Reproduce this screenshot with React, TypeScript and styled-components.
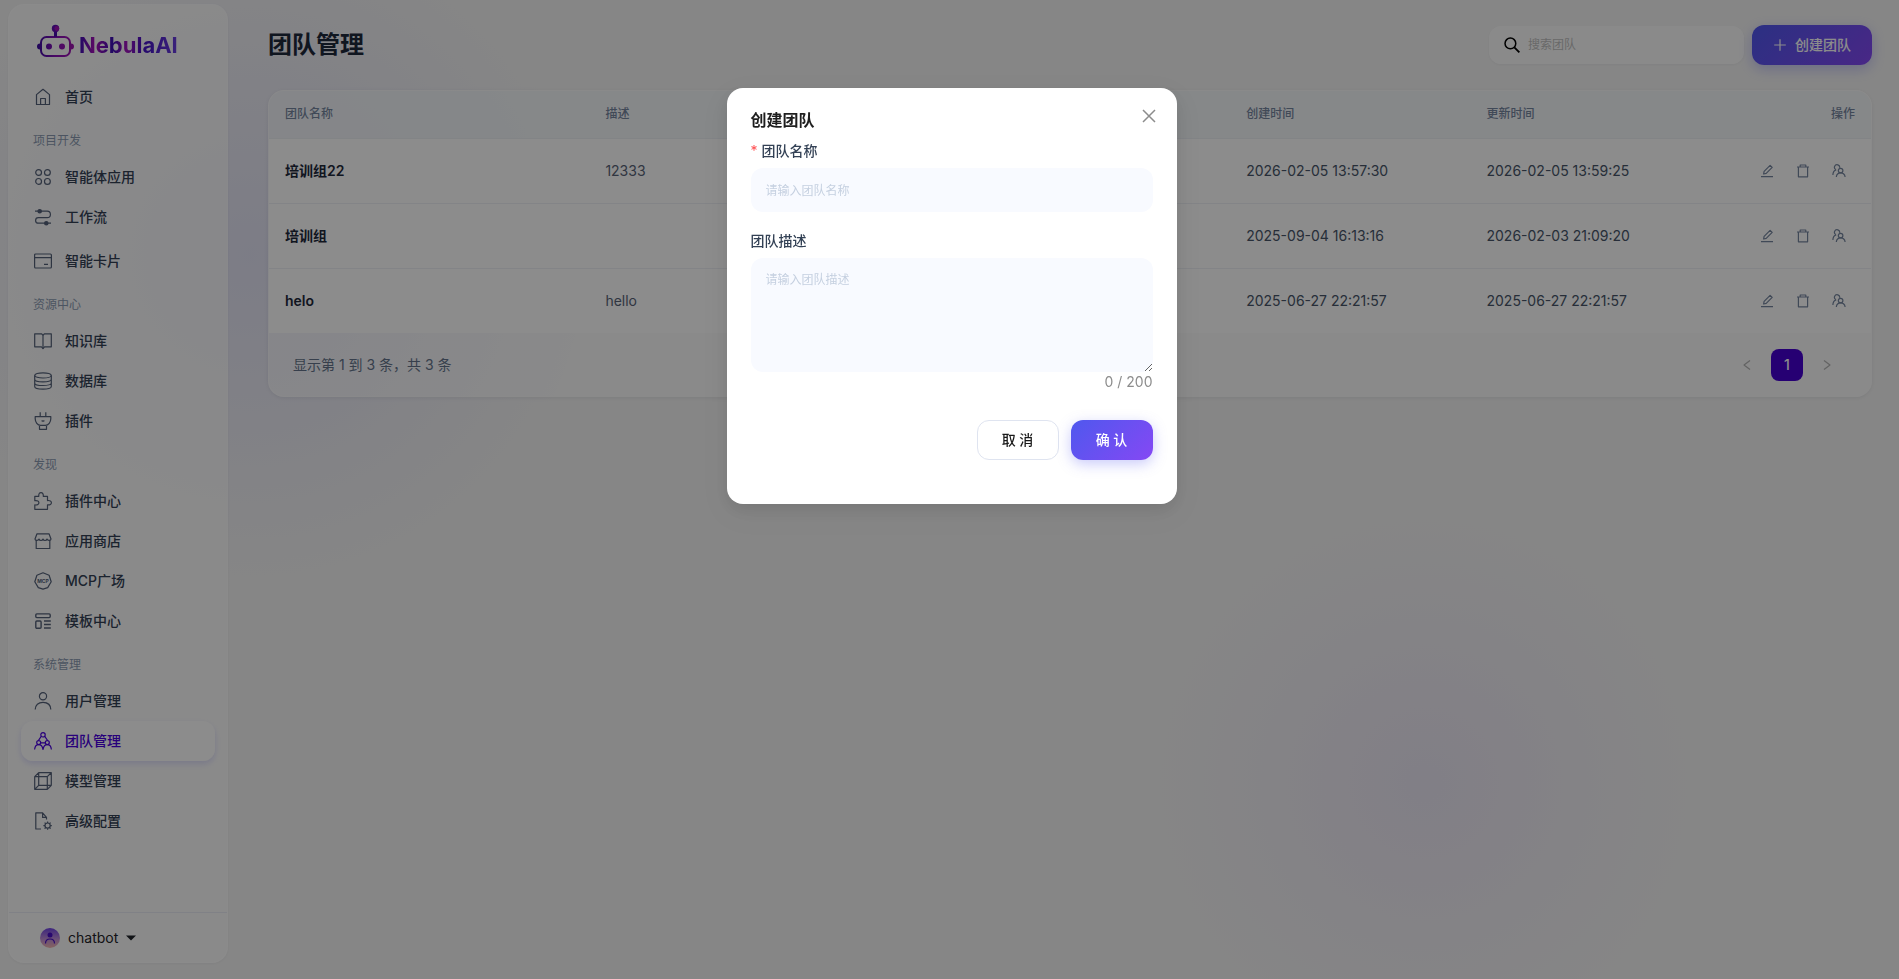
import React, { useState } from "react";
import styled, { createGlobalStyle, css } from "styled-components";

const GlobalStyle = createGlobalStyle`
  *, *::before, *::after { box-sizing: border-box; }
  body {
    margin: 0;
    font-family: Inter, "Noto Sans CJK SC", sans-serif;
    font-size: 14px;
    line-height: 22px;
    color: #334155;
    background: #f5f5f5;
  }
  button, input, textarea { font: inherit; color: inherit; }
  button { cursor: pointer; }
`;

const Page = styled.div`
  display: flex;
  min-height: 100vh;
  background:
    radial-gradient(circle 340px at 250px 255px, rgba(99, 102, 241, 0.13), transparent),
    radial-gradient(circle 285px at 75% 80%, rgba(139, 92, 246, 0.09), transparent),
    #f5f5f5;
`;

/* ---------- sidebar ---------- */

const Sidebar = styled.aside`
  display: flex;
  flex: none;
  flex-direction: column;
  width: 220px;
  margin: 4px 0 16px 8px;
  border: 1px solid rgba(255, 255, 255, 0.3);
  border-radius: 16px;
  background: rgba(255, 255, 255, 0.7);
  box-shadow: 0 1px 3px rgba(15, 23, 42, 0.05);
`;

const Brand = styled.a`
  display: flex;
  align-items: center;
  gap: 4px;
  height: 72px;
  padding: 0 28px;
  text-decoration: none;
`;

const BrandName = styled.span`
  padding-top: 8px;
  font-size: 22px;
  line-height: 24px;
  font-weight: 700;
  background: linear-gradient(90deg, #3b0fb5 0%, #a912b8 16%, #3b0fb5 34%, #a314bd 48%, #4410c4 64%, #6b3fe0 100%);
  background-clip: text;
  -webkit-background-clip: text;
  color: transparent;
`;

const Nav = styled.nav`
  flex: 1;
  padding: 0 12px;
`;

const SectionLabel = styled.h2`
  margin: 0;
  padding: 15px 12px 7px;
  font-size: 12px;
  line-height: 18px;
  font-weight: 400;
  color: #8b9ab1;
`;

const NavItem = styled.a<{ $active?: boolean; $spaced?: boolean }>`
  display: flex;
  align-items: center;
  gap: 13px;
  height: 40px;
  padding: 0 13px;
  border-radius: 12px;
  font-weight: 500;
  text-decoration: none;
  color: #334155;
  svg { color: #546179; }
  ${(p) => p.$spaced && css`margin-top: 4px;`}
  ${(p) =>
    p.$active &&
    css`
      color: #4a00e0;
      background: rgba(255, 255, 255, 0.8);
      box-shadow: 0 3px 6px rgba(99, 102, 241, 0.2);
      svg { color: #4a00e0; }
    `}
`;

const Account = styled.button`
  display: flex;
  align-items: center;
  gap: 8px;
  height: 50px;
  padding: 0 31px;
  border: 0;
  border-top: 1px solid #e9ebf5;
  background: none;
  color: #1f2329;
`;

/* ---------- main area ---------- */

const Main = styled.main`
  flex: 1;
  min-width: 0;
  padding: 25px 27px 16px 40px;
`;

const TopBar = styled.header`
  display: flex;
  align-items: center;
  gap: 8px;
  height: 40px;
  margin-bottom: 25px;
`;

const Title = styled.h1`
  flex: 1;
  margin: 0;
  font-size: 24px;
  line-height: 32px;
  font-weight: 600;
  color: #1e293b;
`;

const SearchBox = styled.label`
  display: flex;
  align-items: center;
  gap: 8px;
  width: 255px;
  height: 38px;
  padding: 0 15px;
  border-radius: 12px;
  background: rgba(255, 255, 255, 0.7);
  box-shadow: 0 1px 3px rgba(15, 23, 42, 0.05);
  color: #000;
`;

const SearchInput = styled.input`
  flex: 1;
  min-width: 0;
  padding: 0;
  border: 0;
  outline: 0;
  background: none;
  font-size: 12px;
  &::placeholder { color: #bfbfbf; }
`;

const Button = styled.button<{ $primary?: boolean }>`
  display: inline-flex;
  align-items: center;
  justify-content: center;
  gap: 8px;
  min-width: 82px;
  height: 40px;
  padding: 0 20px;
  border: 0;
  border-radius: 12px;
  font-weight: 500;
  white-space: nowrap;
  ${(p) =>
    p.$primary
      ? css`
          padding: 0 21px;
          color: #fff;
          background: linear-gradient(135deg, #4f58ee 0%, #8548f4 100%);
          box-shadow: 0 4px 14px rgba(99, 102, 241, 0.35);
        `
      : css`
          color: #1a1a1a;
          border: 1px solid #dfe4f0;
          background: #fff;
        `}
`;

const Card = styled.section`
  overflow: hidden;
  border: 1px solid rgba(255, 255, 255, 0.3);
  border-radius: 16px;
  background: rgba(255, 255, 255, 0.55);
  box-shadow: 0 1px 4px rgba(15, 23, 42, 0.08);
`;

const Table = styled.table`
  width: 100%;
  border-collapse: separate;
  border-spacing: 0;
  table-layout: fixed;
`;

const HeadCell = styled.th<{ $width: string; $end?: boolean }>`
  width: ${(p) => p.$width};
  height: 48px;
  padding: 0 16px 2px;
  border-bottom: 1px solid #edf0f5;
  background: rgba(241, 245, 249, 0.7);
  font-size: 12px;
  line-height: 18px;
  font-weight: 500;
  text-align: ${(p) => (p.$end ? "right" : "left")};
  color: #76869f;
`;

const Cell = styled.td<{ $tone?: "name" | "muted" }>`
  height: 65px;
  padding: 0 16px;
  border-bottom: 1px solid #eff1f6;
  background: #fff;
  color: ${(p) => (p.$tone === "name" ? "#1e293b" : p.$tone === "muted" ? "#586377" : "#475569")};
  font-weight: ${(p) => (p.$tone === "name" ? 600 : 400)};
  tr:last-child > & {
    height: 64px;
    border-bottom: 0;
  }
`;

const Actions = styled.div`
  display: flex;
  justify-content: flex-end;
  gap: 8px;
  padding-right: 2px;
`;

const IconButton = styled.button`
  display: grid;
  place-items: center;
  width: 28px;
  height: 28px;
  padding: 0;
  border: 0;
  background: none;
  color: #76869f;
`;

const TableFooter = styled.footer`
  display: flex;
  align-items: center;
  justify-content: space-between;
  height: 63px;
  padding: 0 28px 0 24px;
  color: #64748b;
`;

const Pager = styled.nav`
  display: flex;
  gap: 8px;
`;

const PageButton = styled.button<{ $current?: boolean }>`
  display: grid;
  place-items: center;
  width: 32px;
  height: 32px;
  padding: 0;
  border: 0;
  border-radius: 8px;
  font-weight: 500;
  color: ${(p) => (p.$current ? "#fff" : "#b4b4b4")};
  background: ${(p) => (p.$current ? "#4500d1" : "none")};
`;

/* ---------- dialog ---------- */

const Mask = styled.div`
  position: fixed;
  inset: 0;
  display: flex;
  align-items: flex-start;
  justify-content: center;
  padding: 88px 20px 24px 24px;
  overflow: auto;
  background: rgba(0, 0, 0, 0.45);
`;

const Dialog = styled.form`
  position: relative;
  width: 450px;
  padding: 20px 24px 44px;
  border-radius: 16px;
  background: #fff;
  box-shadow: 0 6px 16px rgba(0, 0, 0, 0.08), 0 9px 28px 8px rgba(0, 0, 0, 0.05);
`;

const DialogTitle = styled.h2`
  margin: 0 0 8px;
  font-size: 16px;
  line-height: 24px;
  font-weight: 600;
  color: #1f1f1f;
`;

const CloseButton = styled.button`
  position: absolute;
  top: 12px;
  right: 12px;
  display: grid;
  place-items: center;
  width: 32px;
  height: 32px;
  padding: 0;
  border: 0;
  background: none;
  color: #8c8c8c;
`;

const FieldLabel = styled.label`
  display: block;
  padding-bottom: 6px;
  font-weight: 500;
`;

const Required = styled.span`
  margin-right: 4px;
  font-weight: 400;
  color: #ff4d4f;
`;

const fieldLook = css`
  display: block;
  width: 100%;
  border: 0;
  border-radius: 12px;
  outline: 0;
  background: #f8faff;
  font-size: 12px;
  line-height: 20px;
  &::placeholder { color: #c5d0e0; }
`;

const TextInput = styled.input`
  ${fieldLook}
  height: 44px;
  margin-bottom: 18px;
  padding: 0 15px;
`;

const TextArea = styled.textarea`
  ${fieldLook}
  height: 114px;
  padding: 12px 15px;
  resize: vertical;
`;

const Counter = styled.output`
  display: block;
  margin-bottom: 28px;
  line-height: 20px;
  text-align: right;
  color: #8c8c8c;
`;

const DialogActions = styled.div`
  display: flex;
  justify-content: flex-end;
  gap: 12px;
`;

/* ---------- icons ---------- */

function Icon({ size = 18, width = 1.2, box = 18, children }: { size?: number; width?: number; box?: number; children: React.ReactNode }) {
  return (
    <svg width={size} height={size} viewBox={`0 0 ${box} ${box}`} fill="none" stroke="currentColor" strokeWidth={width} strokeLinejoin="round" aria-hidden="true">
      {children}
    </svg>
  );
}

const icons = {
  home: <><path d="M2.5 6.6 9 1.3l6.5 5.3v9.9h-13z" /><path d="M6.6 16.5v-6h4.8v6" /></>,
  apps: <><circle cx="4.6" cy="4.5" r="2.9" /><circle cx="13.4" cy="4.5" r="2.9" /><circle cx="4.6" cy="13.4" r="2.9" /><circle cx="13.4" cy="13.4" r="2.9" /></>,
  flow: <><path d="M1 3.2h12.2a3.2 3.2 0 0 1 0 6.4H4.4a2.8 2.8 0 0 0 0 5.6H17" /><circle cx="5.7" cy="3.2" r="1.7" fill="currentColor" /><circle cx="12.3" cy="15.2" r="1.7" fill="currentColor" /></>,
  card: <><rect x=".6" y="2" width="16.8" height="14" rx="1" /><path d="M.6 5.6h16.8M10 12.3h4" /></>,
  book: <><path d="M9 3.4 7.7 1.8H.7v13H7.5L9 16.6l1.5-1.8h6.8v-13h-7z" /><path d="M9 3.4v13.2" /></>,
  database: <><ellipse cx="9" cy="3.4" rx="8.3" ry="2.6" /><path d="M.7 3.4v11.2c0 1.5 3.7 2.6 8.3 2.6s8.3-1.1 8.3-2.6V3.4M.7 7.2c0 1.5 3.7 2.6 8.3 2.6s8.3-1.1 8.3-2.6M.7 10.9c0 1.5 3.7 2.6 8.3 2.6s8.3-1.1 8.3-2.6" /></>,
  plug: <><path d="M6.2.3v4.2M11.8.3v4.2M1.2 4.6h15.6v2.2c0 3.3-2.4 6.5-5.4 6.5H6.6c-3 0-5.4-3.2-5.4-6.5zM5.5 13.3v4h7v-4M7.6 8.6l1.4.7 1.4-.7" /></>,
  puzzle: <path d="M.8 4.3h4c-.3-2.400.7-3.700 2.200-3.700s2.600 1.300 2.300 3.700h4.200v4.300c2.500-.4 3.900.600 3.900 2.100s-1.400 2.500-3.900 2.100v4.500H.8v-4.400c2.700.4 4.100-.6 4.100-2.100S3.500 8.300.8 8.700z" />,
  shop: <><path d="M2.200 8.200v8.300h13.600V8.200M3 1.800h12l2 5.200c0 1.600-3.400 2-4 0-.5 2-3.500 2-4 0-.5 2-3.500 2-4 0-.6 2-4 1.600-4 0z" /></>,
  mcp: <><path d="M9 .8l6.100 2.500 2.100 6.400-3.500 5.900-4.700 1.500-4.700-1.500L.800 9.700l2.100-6.400z" /><text x="9" y="11" textAnchor="middle" fontSize="5" fontWeight="700" fill="currentColor" stroke="none">MCP</text></>,
  template: <><rect x="1.800" y="1.900" width="14.400" height="3.700" rx="1" strokeWidth="1.400" /><rect x="1.800" y="9" width="5.300" height="7.200" rx="1" strokeWidth="1.400" /><path d="M10 9h6.800M10 12.500h6.800M10 16h6.800" strokeWidth="1.400" /></>,
  user: <><circle cx="9" cy="4.300" r="3.600" /><path d="M1.200 17.600c0-4.700 3.200-7.300 7.800-7.300s7.800 2.600 7.800 7.300" /></>,
  team: <><circle cx="9" cy="2.800" r="2.200" /><circle cx="4.700" cy="10.600" r="2" /><circle cx="13.300" cy="10.600" r="2" /><path d="M7.200 4.300 4.400 8.500M10.800 4.300l2.800 4.200M.6 17.500c.3-2.900 1.800-4.800 4.100-4.800S8.500 14.400 9 17.500c.5-3.100 2-4.800 4.300-4.800s3.800 1.900 4.100 4.800M6.600 10.800h4.800" /></>,
  cube: <path d="M.7 4.700h12.600v12.600H.7zM4.700.7h12.600v12.600H4.700zM.7 4.700l4-4M13.300 4.700l4-4M13.300 17.300l4-4M.7 17.300l4-4" />,
  config: <><path d="M7 17H1.800V.8h6.800l3.900 4.600v2M8.600.8v4.600h3.900" /><circle cx="13.600" cy="13.600" r="2.600" /><path d="M13.600 9.400v1.600M13.600 16.200v1.600M9.400 13.600H11M16.200 13.600h1.600M10.600 10.600l1.100 1.100M15.500 15.500l1.100 1.100M10.600 16.600l1.100-1.100M15.500 11.700l1.100-1.100" /></>,
};

type IconName = keyof typeof icons;

function Robot() {
  return (
    <svg width="38" height="34" viewBox="0 0 38 34" fill="none" aria-hidden="true">
      <defs>
        <linearGradient id="robot" x1="0" y1="0" x2="38" y2="0" gradientUnits="userSpaceOnUse">
          <stop offset="0" stopColor="#3a0ca3" />
          <stop offset=".5" stopColor="#8a10b8" />
          <stop offset="1" stopColor="#a014ae" />
        </linearGradient>
      </defs>
      <rect x="4" y="13" width="29" height="19" rx="5.500" stroke="url(#robot)" strokeWidth="2" />
      <path d="M18.500 13V5" stroke="#4c0fb0" strokeWidth="3" />
      <circle cx="18.500" cy="4.500" r="3.700" fill="#5f0fb4" />
      <circle cx="19.800" cy="4.500" r="2.400" fill="#a012b4" />
      <circle cx="12" cy="22.500" r="3" fill="url(#robot)" />
      <circle cx="25" cy="22.500" r="3" fill="url(#robot)" />
      <path d="M3 19.500a3 3 0 0 0 0 6zM34 19.500a3 3 0 0 1 0 6z" fill="url(#robot)" />
    </svg>
  );
}

function Avatar() {
  return (
    <svg width="20" height="20" viewBox="0 0 20 20" fill="none" aria-hidden="true">
      <defs>
        <linearGradient id="avatar" x1="0" y1="0" x2="0" y2="1">
          <stop offset="0" stopColor="#6f43e6" />
          <stop offset=".55" stopColor="#c08fd8" />
          <stop offset="1" stopColor="#f3b6b0" />
        </linearGradient>
      </defs>
      <circle cx="10" cy="10" r="10" fill="url(#avatar)" />
      <circle cx="10" cy="7" r="2.500" fill="#4a10c8" />
      <path d="M5.500 15.500c0-2.800 1.800-4.500 4.500-4.500s4.500 1.700 4.500 4.500" stroke="#4a10c8" strokeWidth="1.200" />
    </svg>
  );
}

/* ---------- data ---------- */

type Item = { label: string; icon: IconName; active?: boolean; spaced?: boolean };

const menu: { title?: string; items: Item[] }[] = [
  { items: [{ label: "首页", icon: "home" }] },
  {
    title: "项目开发",
    items: [
      { label: "智能体应用", icon: "apps" },
      { label: "工作流", icon: "flow" },
      { label: "智能卡片", icon: "card", spaced: true },
    ],
  },
  {
    title: "资源中心",
    items: [
      { label: "知识库", icon: "book" },
      { label: "数据库", icon: "database" },
      { label: "插件", icon: "plug" },
    ],
  },
  {
    title: "发现",
    items: [
      { label: "插件中心", icon: "puzzle" },
      { label: "应用商店", icon: "shop" },
      { label: "MCP广场", icon: "mcp" },
      { label: "模板中心", icon: "template" },
    ],
  },
  {
    title: "系统管理",
    items: [
      { label: "用户管理", icon: "user" },
      { label: "团队管理", icon: "team", active: true },
      { label: "模型管理", icon: "cube" },
      { label: "高级配置", icon: "config" },
    ],
  },
];

const teams = [
  { name: "培训组22", note: "12333", created: "2026-02-05 13:57:30", updated: "2026-02-05 13:59:25" },
  { name: "培训组", note: "", created: "2025-09-04 16:13:16", updated: "2026-02-03 21:09:20" },
  { name: "helo", note: "hello", created: "2025-06-27 22:21:57", updated: "2025-06-27 22:21:57" },
];

function RowActions() {
  return (
    <Actions>
      <IconButton type="button" aria-label="编辑">
        <Icon size={14} box={14}><path d="M1 12.700h12M3.600 10l.5-2.700 6-6 2.100 2.100-6 6z" /></Icon>
      </IconButton>
      <IconButton type="button" aria-label="删除">
        <Icon size={14} box={14}><path d="M1 3h12M4.200 3V1h5.600v2M2.400 3v9.800h9.200V3" /></Icon>
      </IconButton>
      <IconButton type="button" aria-label="成员">
        <Icon size={14} box={14}><circle cx="8.600" cy="6.600" r="2.300" /><path d="M4.300 13c.3-2.600 1.900-4.100 4.300-4.100s4.200 1.500 4.500 4.100M7.600 3.900A2.600 2.600 0 1 0 3.800 5.600M.9 11c0-2.700 1.200-4.600 3.300-5.200" /></Icon>
      </IconButton>
    </Actions>
  );
}

export default function App() {
  const [description, setDescription] = useState("");
  return (
    <>
      <GlobalStyle />
      <Page>
        <Sidebar>
          <Brand href="#">
            <Robot />
            <BrandName>NebulaAI</BrandName>
          </Brand>
          <Nav>
            {menu.map((group, i) => (
              <React.Fragment key={i}>
                {group.title && <SectionLabel>{group.title}</SectionLabel>}
                {group.items.map((item) => (
                  <NavItem key={item.label} href="#" $active={item.active} $spaced={item.spaced}>
                    <Icon>{icons[item.icon]}</Icon>
                    {item.label}
                  </NavItem>
                ))}
              </React.Fragment>
            ))}
          </Nav>
          <Account type="button">
            <Avatar />
            chatbot
            <svg width="10" height="6" viewBox="0 0 10 6" fill="currentColor" aria-hidden="true"><path d="M0 .5h10L5 5.500z" /></svg>
          </Account>
        </Sidebar>

        <Main>
          <TopBar>
            <Title>团队管理</Title>
            <SearchBox>
              <Icon size={16} width={1.6} box={17}><circle cx="6.800" cy="6.800" r="5.700" /><path d="m11 11 5.300 5.300" strokeWidth="2" /></Icon>
              <SearchInput placeholder="搜索团队" aria-label="搜索团队" />
            </SearchBox>
            <Button type="button" $primary>
              <Icon size={14} box={14}><path d="M7 1.200v11.600M1.200 7h11.600" /></Icon>
              创建团队
            </Button>
          </TopBar>

          <Card>
            <Table>
              <thead>
                <tr>
                  <HeadCell $width="20%">团队名称</HeadCell>
                  <HeadCell $width="40%">描述</HeadCell>
                  <HeadCell $width="15%">创建时间</HeadCell>
                  <HeadCell $width="15%">更新时间</HeadCell>
                  <HeadCell $width="10%" $end>操作</HeadCell>
                </tr>
              </thead>
              <tbody>
                {teams.map((team) => (
                  <tr key={team.name}>
                    <Cell $tone="name">{team.name}</Cell>
                    <Cell $tone="muted">{team.note}</Cell>
                    <Cell>{team.created}</Cell>
                    <Cell>{team.updated}</Cell>
                    <Cell><RowActions /></Cell>
                  </tr>
                ))}
              </tbody>
            </Table>
            <TableFooter>
              <span>显示第 1 到 3 条，共 3 条</span>
              <Pager aria-label="分页">
                <PageButton type="button" aria-label="上一页">
                  <Icon size={12} box={12}><path d="M9 1.500 3 6l6 4.500" /></Icon>
                </PageButton>
                <PageButton type="button" $current>1</PageButton>
                <PageButton type="button" aria-label="下一页">
                  <Icon size={12} box={12}><path d="m3 1.500 6 4.500-6 4.500" /></Icon>
                </PageButton>
              </Pager>
            </TableFooter>
          </Card>
        </Main>
      </Page>

      <Mask>
        <Dialog role="dialog" aria-modal="true" aria-labelledby="dialog-title" onSubmit={(e) => e.preventDefault()}>
          <DialogTitle id="dialog-title">创建团队</DialogTitle>
          <CloseButton type="button" aria-label="关闭">
            <Icon size={14} box={14} width={1.5}><path d="m1 1 12 12M13 1 1 13" /></Icon>
          </CloseButton>
          <FieldLabel htmlFor="team-name"><Required>*</Required>团队名称</FieldLabel>
          <TextInput id="team-name" placeholder="请输入团队名称" />
          <FieldLabel htmlFor="team-description">团队描述</FieldLabel>
          <TextArea
            id="team-description"
            placeholder="请输入团队描述"
            maxLength={200}
            value={description}
            onChange={(e) => setDescription(e.target.value)}
          />
          <Counter htmlFor="team-description">{description.length} / 200</Counter>
          <DialogActions>
            <Button type="button">取 消</Button>
            <Button type="submit" $primary>确 认</Button>
          </DialogActions>
        </Dialog>
      </Mask>
    </>
  );
}
